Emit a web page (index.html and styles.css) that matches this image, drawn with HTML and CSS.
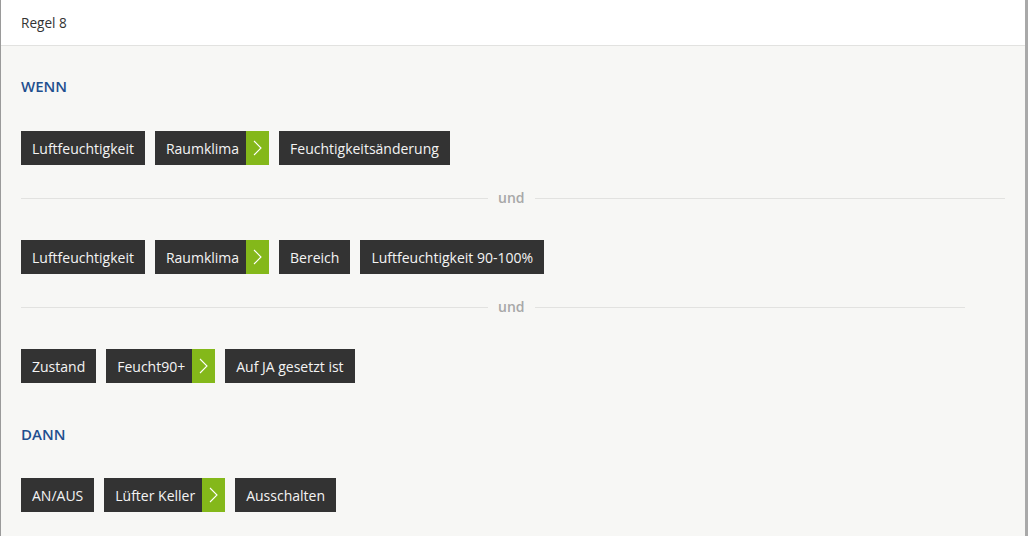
FILE: index.html
```html
<!DOCTYPE html>
<html lang="de">
<head>
<meta charset="utf-8">
<title>Regel 8</title>
<link rel="stylesheet" href="styles.css">
</head>
<body>
<div class="frame">
  <div class="header">Regel 8</div>
  <div class="content">
    <div class="heading heading-first">WENN</div>
    <div class="row row-first">
      <span class="chip">Luftfeuchtigkeit</span>
      <span class="chip chip-arrow"><span class="chip-label">Raumklima</span><span class="arrow"><svg width="9" height="16" viewBox="0 0 9 16"><path d="M1 1 L8 8 L1 15" fill="none" stroke="#fff" stroke-width="1.1"/></svg></span></span>
      <span class="chip">Feuchtigkeitsänderung</span>
    </div>
    <div class="divider"><span class="line line-left"></span><span class="und">und</span><span class="line line-right"></span></div>
    <div class="row">
      <span class="chip">Luftfeuchtigkeit</span>
      <span class="chip chip-arrow"><span class="chip-label">Raumklima</span><span class="arrow"><svg width="9" height="16" viewBox="0 0 9 16"><path d="M1 1 L8 8 L1 15" fill="none" stroke="#fff" stroke-width="1.1"/></svg></span></span>
      <span class="chip">Bereich</span>
      <span class="chip">Luftfeuchtigkeit 90-100%</span>
    </div>
    <div class="divider divider-short"><span class="line line-left"></span><span class="und">und</span><span class="line line-right"></span></div>
    <div class="row">
      <span class="chip">Zustand</span>
      <span class="chip chip-arrow"><span class="chip-label">Feucht90+</span><span class="arrow"><svg width="9" height="16" viewBox="0 0 9 16"><path d="M1 1 L8 8 L1 15" fill="none" stroke="#fff" stroke-width="1.1"/></svg></span></span>
      <span class="chip">Auf JA gesetzt ist</span>
    </div>
    <div class="heading heading-then">DANN</div>
    <div class="row row-then">
      <span class="chip">AN/AUS</span>
      <span class="chip chip-arrow"><span class="chip-label">Lüfter Keller</span><span class="arrow"><svg width="9" height="16" viewBox="0 0 9 16"><path d="M1 1 L8 8 L1 15" fill="none" stroke="#fff" stroke-width="1.1"/></svg></span></span>
      <span class="chip">Ausschalten</span>
    </div>
  </div>
</div>
</body>
</html>
```

FILE: styles.css
```css
html, body {
  margin: 0;
  padding: 0;
}
body {
  font-family: "Open Sans", "Liberation Sans", sans-serif;
  background: #f7f7f5;
}
.frame {
  width: 1028px;
  height: 536px;
  box-sizing: border-box;
  border-left: 1px solid #9a9a9a;
  border-right: 3px solid #a9a9a9;
  background: #f7f7f5;
  display: flex;
  flex-direction: column;
  overflow: hidden;
}
.header {
  height: 45px;
  line-height: 45px;
  background: #fff;
  border-bottom: 1px solid #e2e2e0;
  padding-left: 20px;
  font-size: 13.6px;
  color: #333;
}
.content {
  padding: 0 20px;
  display: flex;
  flex-direction: column;
}
.heading {
  font-size: 15px;
  line-height: 20px;
  font-weight: 600;
  color: #1f4f8f;
}
.heading-first { margin-top: 30px; }
.heading-then { margin-top: 41px; }
.row {
  display: flex;
  gap: 10px;
  margin-top: 32px;
}
.row-first { margin-top: 35px; }
.row-then { margin-top: 34px; }
.chip {
  display: flex;
  align-items: center;
  height: 34px;
  padding: 0 11px;
  background: #333333;
  color: #f4f4f4;
  font-size: 14px;
  white-space: nowrap;
}
.chip-arrow {
  padding: 0;
}
.chip-label {
  padding: 0 7px 0 11px;
}
.arrow {
  width: 23px;
  height: 34px;
  background: #84b81a;
  display: flex;
  align-items: center;
  justify-content: center;
}
.arrow svg { display: block; }
.divider {
  display: grid;
  grid-template-columns: 467px auto 1fr;
  align-items: center;
  column-gap: 10px;
  height: 20px;
  margin-top: 23px;
}
.divider-short {
  margin-right: 40px;
}
.line {
  height: 1px;
  background: #e2e2e0;
}
.und {
  font-size: 14px;
  font-weight: 600;
  color: #a8a8a8;
  line-height: 20px;
}
```
